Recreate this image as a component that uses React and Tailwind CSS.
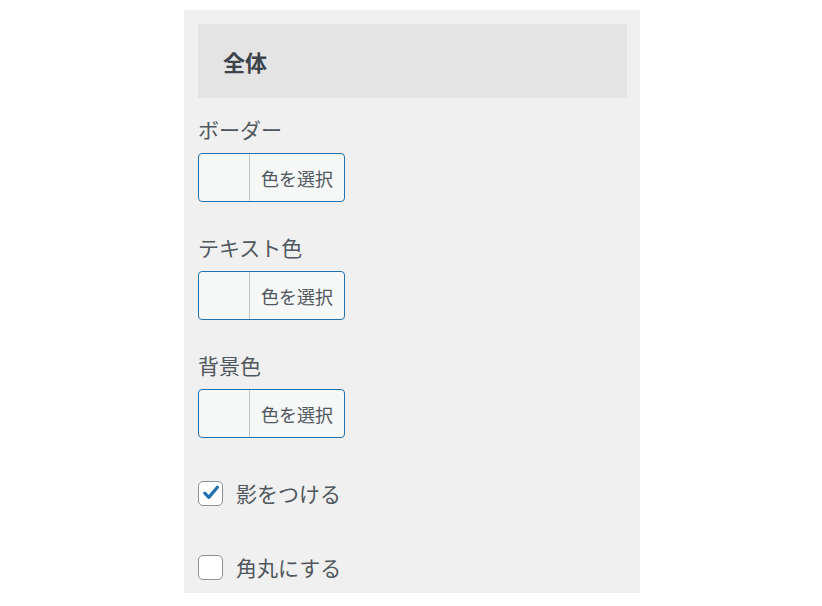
import React from "react";

const font = { fontFamily: '"Noto Sans CJK JP", "Noto Sans", sans-serif' };

function ColorButton() {
  return (
    <button className="flex h-[49px] w-[147px] overflow-hidden rounded-[4px] border border-[#2271b1] bg-[#f6f7f7] p-0">
      <span className="h-full w-[51px] border-r border-[#c3c4c7]" />
      <span className="flex flex-1 items-center justify-center text-[18px] leading-none text-[#50575e]">
        色を選択
      </span>
    </button>
  );
}

function Field({ label, className }) {
  return (
    <div className={className}>
      <div className="h-[28px] text-[21px] leading-[28px] text-[#50575e]">{label}</div>
      <div className="mt-[10px]">
        <ColorButton />
      </div>
    </div>
  );
}

function Check({ checked, label, className }) {
  return (
    <div className={"flex h-[28px] items-center " + className}>
      <span className="flex h-[25px] w-[25px] items-center justify-center rounded-[5px] border border-[#8c8f94] bg-white">
        {checked && (
          <svg width="20" height="20" viewBox="0 0 20 20">
            <path
              d="M3.8 10.2 L7.8 14.4 L16.4 4.2"
              fill="none"
              stroke="#2271b1"
              strokeWidth="3.2"
              strokeLinecap="round"
              strokeLinejoin="round"
            />
          </svg>
        )}
      </span>
      <span className="ml-[13px] text-[21px] leading-[28px] text-[#50575e]">{label}</span>
    </div>
  );
}

export default function App() {
  return (
    <div className="h-[606px] w-[822px] bg-white pt-[10px]" style={font}>
      <div className="ml-[184px] h-[583px] w-[456px] bg-[#f0f0f0] px-[14px] pt-[14px]">
        <div className="flex h-[74px] w-[429px] items-center bg-[#e4e4e4] pl-[25px]">
          <span className="text-[22px] font-bold text-[#3c434a]">全体</span>
        </div>
        <Field label="ボーダー" className="mt-[17px]" />
        <Field label="テキスト色" className="mt-[31px]" />
        <Field label="背景色" className="mt-[31px]" />
        <Check checked label="影をつける" className="mt-[41px]" />
        <Check label="角丸にする" className="mt-[46px]" />
      </div>
    </div>
  );
}
